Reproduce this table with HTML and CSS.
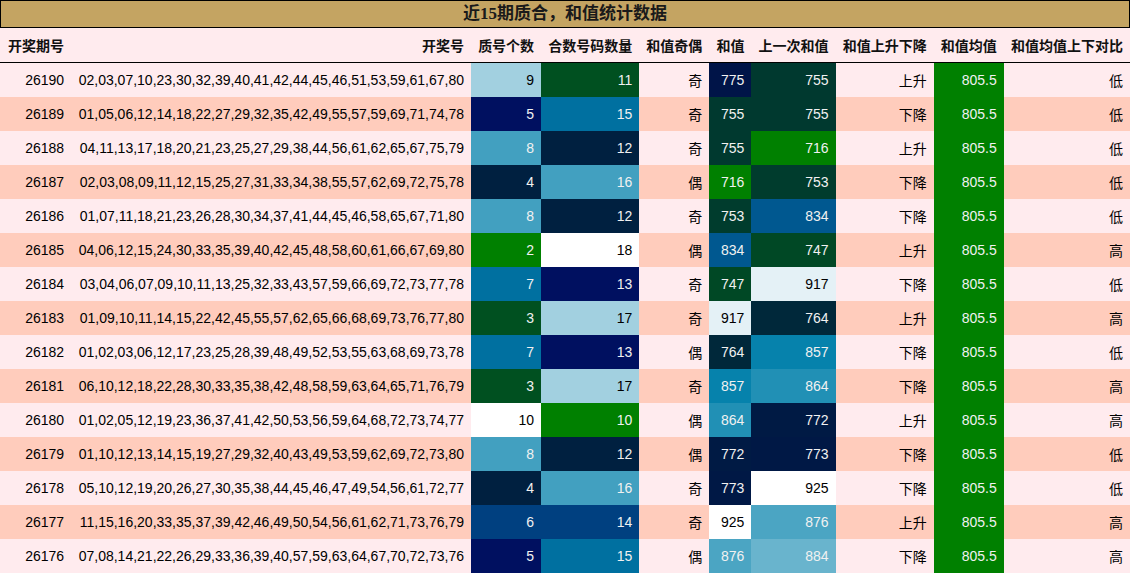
FILE: index.html
```html
<!DOCTYPE html>
<html lang="zh">
<head>
<meta charset="utf-8">
<title>近15期质合，和值统计数据</title>
<link rel="stylesheet" href="styles.css">
</head>
<body>
<div class="wrap">
  <div class="title">近15期质合，和值统计数据</div>
  <table class="stats">
    <thead>
      <tr>
        <th class="first">开奖期号</th>
        <th>开奖号</th>
        <th>质号个数</th>
        <th>合数号码数量</th>
        <th>和值奇偶</th>
        <th>和值</th>
        <th>上一次和值</th>
        <th>和值上升下降</th>
        <th>和值均值</th>
        <th>和值均值上下对比</th>
      </tr>
    </thead>
    <tbody>
      <tr><td>26190</td><td>02,03,07,10,23,30,32,39,40,41,42,44,45,46,51,53,59,61,67,80</td><td style="background:#a2d0e0">9</td><td class="dk" style="background:#005020">11</td><td>奇</td><td class="dk" style="background:#001448">775</td><td class="dk" style="background:#00392f">755</td><td>上升</td><td class="dk avg">805.5</td><td>低</td></tr>
      <tr><td>26189</td><td>01,05,06,12,14,18,22,27,29,32,35,42,49,55,57,59,69,71,74,78</td><td class="dk" style="background:#001060">5</td><td class="dk" style="background:#0070a0">15</td><td>奇</td><td class="dk" style="background:#00392f">755</td><td class="dk" style="background:#00392f">755</td><td>下降</td><td class="dk avg">805.5</td><td>低</td></tr>
      <tr><td>26188</td><td>04,11,13,17,18,20,21,23,25,27,29,38,44,56,61,62,65,67,75,79</td><td class="dk" style="background:#42a0c0">8</td><td class="dk" style="background:#002040">12</td><td>奇</td><td class="dk" style="background:#00392f">755</td><td class="dk" style="background:#008000">716</td><td>上升</td><td class="dk avg">805.5</td><td>低</td></tr>
      <tr><td>26187</td><td>02,03,08,09,11,12,15,25,27,31,33,34,38,55,57,62,69,72,75,78</td><td class="dk" style="background:#002040">4</td><td class="dk" style="background:#42a0c0">16</td><td>偶</td><td class="dk" style="background:#008000">716</td><td class="dk" style="background:#003c2d">753</td><td>下降</td><td class="dk avg">805.5</td><td>低</td></tr>
      <tr><td>26186</td><td>01,07,11,18,21,23,26,28,30,34,37,41,44,45,46,58,65,67,71,80</td><td class="dk" style="background:#42a0c0">8</td><td class="dk" style="background:#002040">12</td><td>奇</td><td class="dk" style="background:#003c2d">753</td><td class="dk" style="background:#005890">834</td><td>下降</td><td class="dk avg">805.5</td><td>低</td></tr>
      <tr><td>26185</td><td>04,06,12,15,24,30,33,35,39,40,42,45,48,58,60,61,66,67,69,80</td><td class="dk" style="background:#008000">2</td><td style="background:#ffffff">18</td><td>偶</td><td class="dk" style="background:#005890">834</td><td class="dk" style="background:#004825">747</td><td>上升</td><td class="dk avg">805.5</td><td>高</td></tr>
      <tr><td>26184</td><td>03,04,06,07,09,10,11,13,25,32,33,43,57,59,66,69,72,73,77,78</td><td class="dk" style="background:#0070a0">7</td><td class="dk" style="background:#001060">13</td><td>奇</td><td class="dk" style="background:#004825">747</td><td style="background:#e4f1f6">917</td><td>下降</td><td class="dk avg">805.5</td><td>低</td></tr>
      <tr><td>26183</td><td>01,09,10,11,14,15,22,42,45,55,57,62,65,66,68,69,73,76,77,80</td><td class="dk" style="background:#005020">3</td><td style="background:#a2d0e0">17</td><td>奇</td><td style="background:#e4f1f6">917</td><td class="dk" style="background:#00283a">764</td><td>上升</td><td class="dk avg">805.5</td><td>高</td></tr>
      <tr><td>26182</td><td>01,02,03,06,12,17,23,25,28,39,48,49,52,53,55,63,68,69,73,78</td><td class="dk" style="background:#0070a0">7</td><td class="dk" style="background:#001060">13</td><td>偶</td><td class="dk" style="background:#00283a">764</td><td class="dk" style="background:#0682ac">857</td><td>下降</td><td class="dk avg">805.5</td><td>低</td></tr>
      <tr><td>26181</td><td>06,10,12,18,22,28,30,33,35,38,42,48,58,59,63,64,65,71,76,79</td><td class="dk" style="background:#005020">3</td><td style="background:#a2d0e0">17</td><td>奇</td><td class="dk" style="background:#0682ac">857</td><td class="dk" style="background:#2190b5">864</td><td>下降</td><td class="dk avg">805.5</td><td>高</td></tr>
      <tr><td>26180</td><td>01,02,05,12,19,23,36,37,41,42,50,53,56,59,64,68,72,73,74,77</td><td style="background:#ffffff">10</td><td class="dk" style="background:#008000">10</td><td>偶</td><td class="dk" style="background:#2190b5">864</td><td class="dk" style="background:#001a44">772</td><td>上升</td><td class="dk avg">805.5</td><td>高</td></tr>
      <tr><td>26179</td><td>01,10,12,13,14,15,19,27,29,32,40,43,49,53,59,62,69,72,73,80</td><td class="dk" style="background:#42a0c0">8</td><td class="dk" style="background:#002040">12</td><td>偶</td><td class="dk" style="background:#001a44">772</td><td class="dk" style="background:#001845">773</td><td>下降</td><td class="dk avg">805.5</td><td>低</td></tr>
      <tr><td>26178</td><td>05,10,12,19,20,26,27,30,35,38,44,45,46,47,49,54,56,61,72,77</td><td class="dk" style="background:#002040">4</td><td class="dk" style="background:#42a0c0">16</td><td>奇</td><td class="dk" style="background:#001845">773</td><td style="background:#ffffff">925</td><td>下降</td><td class="dk avg">805.5</td><td>低</td></tr>
      <tr><td>26177</td><td>11,15,16,20,33,35,37,39,42,46,49,50,54,56,61,62,71,73,76,79</td><td class="dk" style="background:#004080">6</td><td class="dk" style="background:#004080">14</td><td>奇</td><td style="background:#ffffff">925</td><td class="dk" style="background:#4ba5c3">876</td><td>上升</td><td class="dk avg">805.5</td><td>高</td></tr>
      <tr><td>26176</td><td>07,08,14,21,22,26,29,33,36,39,40,57,59,63,64,67,70,72,73,76</td><td class="dk" style="background:#001060">5</td><td class="dk" style="background:#0070a0">15</td><td>偶</td><td class="dk" style="background:#4ba5c3">876</td><td class="dk" style="background:#69b4cd">884</td><td>下降</td><td class="dk avg">805.5</td><td>高</td></tr>
    </tbody>
  </table>
</div>
</body>
</html>
```

FILE: styles.css
```css
html, body {
  margin: 0;
  padding: 0;
  background: #ffffff;
}

body {
  font-family: "Liberation Sans", "Noto Sans CJK SC", sans-serif;
  font-size: 14px;
  color: #000000;
}

.wrap {
  width: 1130px;
  display: flex;
  flex-direction: column;
}

.title {
  height: 26px;
  line-height: 26px;
  border: 1px solid #000000;
  background: #c4a462;
  text-align: center;
  font-family: "Liberation Serif", "Noto Sans CJK SC", serif;
  font-size: 17px;
  font-weight: bold;
  color: #1a1a1a;
}

.stats {
  border-collapse: collapse;
  border-spacing: 0;
  width: 1130px;
}

.stats th,
.stats td {
  height: 34px;
  padding: 0 7px;
  text-align: right;
  white-space: nowrap;
  vertical-align: middle;
}

.stats thead tr {
  background: #ffebee;
}

.stats th {
  font-weight: bold;
  border-bottom: 1px solid #000000;
  color: #111111;
}

.stats th.first {
  text-align: left;
  padding-left: 8px;
}

.stats tbody tr:nth-child(odd) {
  background: #ffebee;
}

.stats tbody tr:nth-child(even) {
  background: #ffccbc;
}

.stats td.dk {
  color: #f1f1f1;
}

.stats td.avg {
  background: #008000;
}
```
